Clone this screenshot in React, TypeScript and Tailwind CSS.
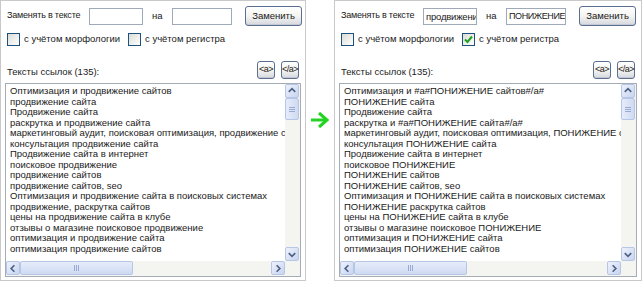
import { ReactNode } from 'react';

const leftLines = [
  'Оптимизация и продвижение сайтов',
  'продвижение сайта',
  'Продвижение сайта',
  'раскрутка и продвижение сайта',
  'маркетинговый аудит, поисковая оптимизация, продвижение сайта',
  'консультация продвижение сайта',
  'Продвижение сайта в интернет',
  'поисковое продвижение',
  'продвижение сайтов',
  'продвижение сайтов, seo',
  'Оптимизация и продвижение сайта в поисковых системах',
  'продвижение, раскрутка сайтов',
  'цены на продвижение сайта в клубе',
  'отзывы о магазине поисковое продвижение',
  'оптимизация и продвижение сайта',
  'оптимизация продвижение сайтов',
];

const rightLines = [
  'Оптимизация и #a#ПОНИЖЕНИЕ сайтов#/a#',
  'ПОНИЖЕНИЕ сайта',
  'Продвижение сайта',
  'раскрутка и #a#ПОНИЖЕНИЕ сайта#/a#',
  'маркетинговый аудит, поисковая оптимизация, ПОНИЖЕНИЕ сайта',
  'консультация ПОНИЖЕНИЕ сайта',
  'Продвижение сайта в интернет',
  'поисковое ПОНИЖЕНИЕ',
  'ПОНИЖЕНИЕ сайтов',
  'ПОНИЖЕНИЕ сайтов, seo',
  'Оптимизация и ПОНИЖЕНИЕ сайта в поисковых системах',
  'ПОНИЖЕНИЕ  раскрутка сайтов',
  'цены на ПОНИЖЕНИЕ сайта в клубе',
  'отзывы о магазине поисковое ПОНИЖЕНИЕ',
  'оптимизация и ПОНИЖЕНИЕ сайта',
  'оптимизация ПОНИЖЕНИЕ сайтов',
];

function Checkbox({ checked, label }: { checked?: boolean; label: string }) {
  return (
    <div className="flex items-center gap-[4px] whitespace-nowrap">
      <div className="w-[13px] h-[13px] border border-[#1c5180] bg-gradient-to-br from-[#dcdcd6] to-white flex items-center justify-center">
        {checked && (
          <svg width="9" height="9" viewBox="0 0 9 9">
            <path d="M1 4.5 L3.5 7 L8 1.5" stroke="#21a121" strokeWidth="2" fill="none" />
          </svg>
        )}
      </div>
      <span>{label}</span>
    </div>
  );
}

function XpButton({ children, className }: { children: ReactNode; className: string }) {
  return (
    <div
      className={
        'flex items-center justify-center whitespace-nowrap border border-[#5b6f91] rounded-[3px] bg-gradient-to-b from-white via-[#f4f4f0] to-[#d6d8e0] shadow-[inset_0_-1px_0_#c4c8d4] ' +
        className
      }
    >
      {children}
    </div>
  );
}

function ScrollBtn({ dir }: { dir: 'up' | 'down' | 'left' | 'right' }) {
  const d = {
    up: 'M3 7 L6.5 3.5 L10 7',
    down: 'M3 5 L6.5 8.5 L10 5',
    left: 'M8 3 L4.5 6.5 L8 10',
    right: 'M5 3 L8.5 6.5 L5 10',
  }[dir];
  return (
    <div className="w-[14px] h-[14px] shrink-0 rounded-[2px] border border-[#b6c6e6] bg-gradient-to-br from-[#eef2fc] to-[#c8d4f0] flex items-center justify-center">
      <svg width="13" height="13" viewBox="0 0 13 13">
        <path d={d} stroke="#4d6185" strokeWidth="1.8" fill="none" />
      </svg>
    </div>
  );
}

function Panel({
  find,
  repl,
  checked,
  lines,
  w,
}: {
  find: string;
  repl: string;
  checked: boolean;
  lines: string[];
  w: string;
}) {
  return (
    <div className={'h-[281px] border border-[#c9c9c9] bg-white flex flex-col text-[9.5px] text-[#1a1a1a] ' + w}>
      <div className="flex items-center h-[20px] mt-[5px] pl-[6px] whitespace-nowrap">
        <span className="w-[82px] text-[9px] tracking-[-0.2px]">Заменять в тексте</span>
        <div className="w-[54px] h-[17px] border border-[#9fa9b8] overflow-hidden whitespace-nowrap px-[2px] leading-[15px] tracking-[-0.2px]">
          {find}
        </div>
        <span className="ml-[9px] w-[20px]">на</span>
        <div className="w-[60px] h-[17px] border border-[#9fa9b8] overflow-hidden whitespace-nowrap px-[2px] leading-[15px] text-[9px] tracking-[-0.4px]">
          {repl}
        </div>
        <XpButton className="ml-[13px] w-[57px] h-[20px]">Заменить</XpButton>
      </div>
      <div className="flex items-center h-[13px] mt-[7px] pl-[6px]">
        <div className="w-[121px]">
          <Checkbox label="с учётом морфологии" />
        </div>
        <Checkbox checked={checked} label="с учётом регистра" />
      </div>
      <div className="flex items-center h-[18px] mt-[15px] pl-[6px] pr-[6px] whitespace-nowrap">
        <span className="flex-1 pt-[4px]">Тексты ссылок (135):</span>
        <XpButton className="w-[18px] h-[18px] text-[9px] tracking-tighter">&lt;a&gt;</XpButton>
        <XpButton className="ml-[6px] w-[18px] h-[18px] text-[9px] tracking-tighter">&lt;/a&gt;</XpButton>
      </div>
      <div className="mx-[4px] mt-[4px] h-[194px] border border-[#a5acb5] flex flex-col">
        <div className="flex flex-1 min-h-0">
          <div className="flex-1 min-w-0 overflow-hidden pl-[4px] pt-[2px] leading-[10.5px] whitespace-nowrap">
            {lines.map((l, i) => (
              <div key={i}>{l}</div>
            ))}
          </div>
          <div className="w-[15px] bg-[#f4f4f0] flex flex-col">
            <ScrollBtn dir="up" />
            <div className="h-[22px] w-[14px] rounded-[2px] border border-[#b6c6e6] bg-gradient-to-r from-[#e6ecfa] to-[#cfdaf2] flex flex-col items-center justify-center gap-[1px]">
              <div className="w-[6px] h-px bg-[#9aaad0]" />
              <div className="w-[6px] h-px bg-[#9aaad0]" />
              <div className="w-[6px] h-px bg-[#9aaad0]" />
            </div>
            <div className="flex-1" />
            <ScrollBtn dir="down" />
          </div>
        </div>
        <div className="flex h-[15px] bg-[#f4f4f0]">
          <ScrollBtn dir="left" />
          <div className="w-[113px] h-[14px] rounded-[2px] border border-[#b6c6e6] bg-gradient-to-b from-[#e6ecfa] to-[#cfdaf2] flex items-center justify-center gap-[1px]">
            <div className="w-px h-[6px] bg-[#9aaad0]" />
            <div className="w-px h-[6px] bg-[#9aaad0]" />
            <div className="w-px h-[6px] bg-[#9aaad0]" />
          </div>
          <div className="flex-1" />
          <ScrollBtn dir="right" />
          <div className="w-[15px]" />
        </div>
      </div>
    </div>
  );
}

export default function App() {
  return (
    <div className="w-[642px] h-[282px] bg-white flex font-['Liberation_Sans',sans-serif]">
      <Panel find="" repl="" checked={false} lines={leftLines} w="w-[306px]" />
      <div className="w-[28px] flex justify-center pt-[110px]">
        <svg width="20" height="20" viewBox="0 0 20 20">
          <path d="M1 10 H15" stroke="#22d322" strokeWidth="3" />
          <path d="M9 3 L17 10 L9 17" stroke="#22d322" strokeWidth="3" fill="none" />
        </svg>
      </div>
      <Panel find="продвижение" repl="ПОНИЖЕНИЕ" checked lines={rightLines} w="w-[308px]" />
    </div>
  );
}
